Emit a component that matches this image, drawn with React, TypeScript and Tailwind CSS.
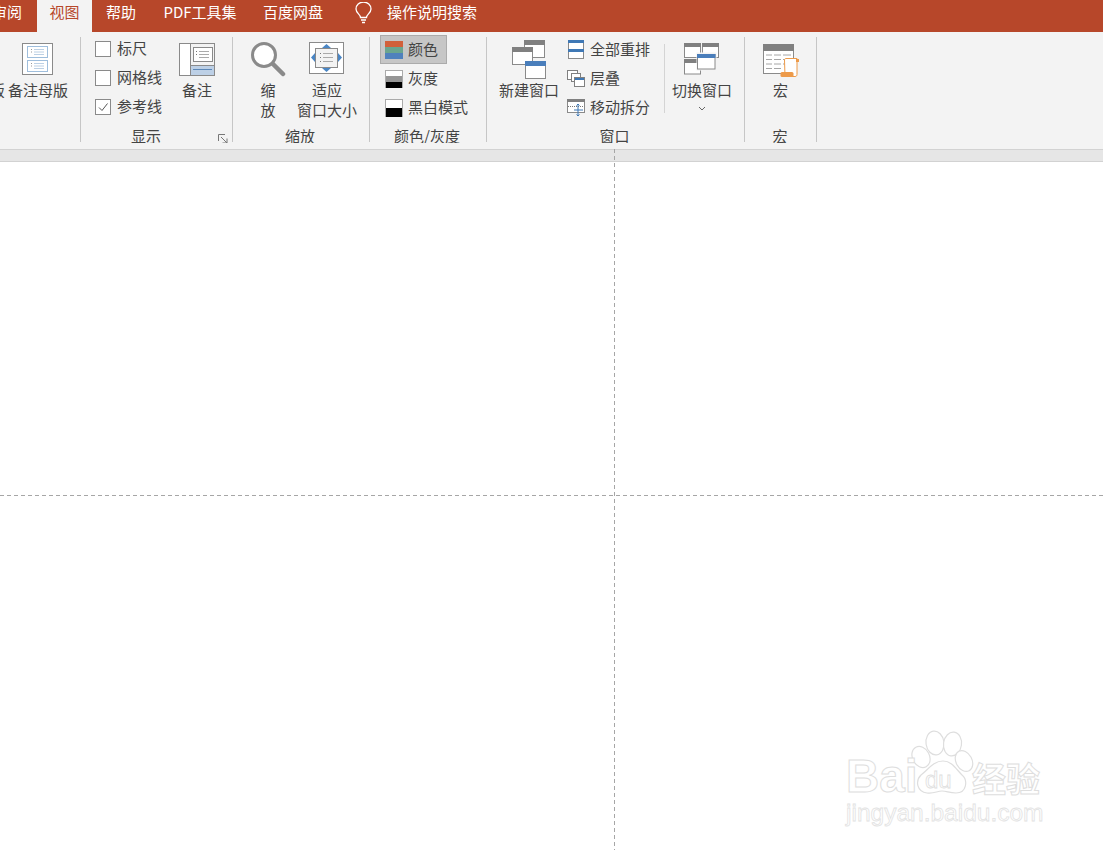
import React from "react";

const FONT = "font-['Noto_Sans_CJK_SC','Noto_Sans',sans-serif]";

function Tab({ children, active, className = "" }: { children: React.ReactNode; active?: boolean; className?: string }) {
  return (
    <div className={`h-[32px] shrink-0 leading-[23px] text-center ${active ? "bg-[#f3f3f3] text-[#b7472a]" : "text-white"} ${className}`}>
      {children}
    </div>
  );
}

function Group({ width, label, children, labelClass = "", extra }: { width: number; label: string; children: React.ReactNode; labelClass?: string; extra?: React.ReactNode }) {
  return (
    <div className="flex shrink-0 h-[117px]">
      <div className="relative flex flex-col h-[111px] overflow-hidden" style={{ width }}>
        <div className="flex h-[94px] shrink-0">{children}</div>
        <div className={`h-[20px] shrink-0 leading-[20px] text-center ${labelClass}`}>{label}</div>
        {extra}
      </div>
      <div className="w-px h-[105px] mt-[5px] bg-[#c6c6c6] shrink-0" />
    </div>
  );
}

function Large({ width, icon, iconTop, lines, className = "", chevron }: { width: number; icon: React.ReactNode; iconTop: number; lines: string[]; className?: string; chevron?: boolean }) {
  return (
    <div className={`flex flex-col items-center shrink-0 ${className}`} style={{ width }}>
      <div className="h-[48px] shrink-0 flex justify-center" style={{ paddingTop: iconTop }}>{icon}</div>
      {lines.map((l) => (
        <div key={l} className="h-[20px] leading-[20px] whitespace-nowrap">{l}</div>
      ))}
      {chevron && (
        <svg width="8" height="5" viewBox="0 0 8 5" className="mt-[6px]" fill="none" stroke="#666"><path d="M1 1l3 3 3-3" /></svg>
      )}
    </div>
  );
}

function CheckRow({ label, checked }: { label: string; checked?: boolean }) {
  return (
    <div className="h-[29px] flex items-center gap-[6px] whitespace-nowrap">
      <div className="w-[16px] h-[16px] border border-[#8a8a8a] bg-white flex items-center justify-center">
        {checked && (
          <svg width="12" height="12" viewBox="0 0 12 12" fill="none" stroke="#555"><path d="M2 6.5l3 3 5.5-7" /></svg>
        )}
      </div>
      {label}
    </div>
  );
}

function Swatch({ colors, outlined }: { colors: string[]; outlined?: boolean }) {
  return (
    <div className={`w-[18px] h-[18px] flex flex-col shrink-0 ${outlined ? "border-t border-x border-[#aaa]" : ""}`}>
      {colors.map((c, i) => (
        <div key={i} className="flex-1" style={{ background: c }} />
      ))}
    </div>
  );
}

const NotesMasterIcon = (
  <svg width="32" height="32" viewBox="0 0 32 32" fill="none">
    <rect x=".5" y=".5" width="30" height="31" fill="#fff" stroke="#8a8a8a" />
    <rect x="5.5" y="3.5" width="20" height="11" stroke="#3f7cb8" strokeDasharray="1 1" />
    <rect x="5.5" y="17.5" width="20" height="11" stroke="#3f7cb8" strokeDasharray="1 1" />
    <path d="M12 6.500h10M12 9h10M12 11.500h10M12 20.500h10M12 23h10M12 25.500h10" stroke="#bcd0e4" />
    <path d="M9 6.500h1M9 9h1M9 20.500h1M9 23h1" stroke="#999" />
  </svg>
);

const NotesIcon = (
  <svg width="36" height="33" viewBox="0 0 36 33" fill="none">
    <rect x=".5" y=".5" width="35" height="32" fill="#fff" stroke="#8a8a8a" />
    <rect x="11.5" y=".5" width="24" height="22" fill="#f3f3f3" stroke="#8a8a8a" />
    <rect x="14.5" y="4.5" width="19" height="14" fill="#fff" stroke="#8a8a8a" />
    <path d="M20 8.500h10M20 11.500h10M20 14.500h10" stroke="#aaa" />
    <path d="M17 8.500h1M17 11.500h1" stroke="#777" />
    <rect x="11.5" y="22.5" width="24" height="10" fill="#bdd0e6" stroke="#8a8a8a" />
    <path d="M14 26.500h19" stroke="#5c88b8" />
  </svg>
);

const ZoomIcon = (
  <svg width="36" height="36" viewBox="0 0 36 36" fill="none">
    <circle cx="14" cy="14" r="11.5" fill="#fff" stroke="#8a8a8a" strokeWidth="3" />
    <path d="M23 23l10 10" stroke="#8a8a8a" strokeWidth="4.500" strokeLinecap="round" />
  </svg>
);

const FitIcon = (
  <svg width="36" height="32" viewBox="0 0 36 32" fill="none">
    <rect x=".5" y=".5" width="34" height="31" fill="#fff" stroke="#8a8a8a" />
    <path d="M17.5 2l4.500 4h-9zM17.500 30l4.500-4h-9zM2 15.500l4-4.500v9zM33 15.500l-4-4.500v9z" fill="#4a86c5" />
    <rect x="6.5" y="6.5" width="22" height="19" fill="#f3f3f3" stroke="#8a8a8a" />
    <path d="M14 11.500h10M14 15.500h10M14 19.500h10" stroke="#aaa" />
    <path d="M11 11.500h1M11 15.500h1M11 19.500h1" stroke="#777" />
  </svg>
);

const NewWindowIcon = (
  <svg width="36" height="39" viewBox="0 0 36 39" fill="none" className="translate-x-[1px]">
    <rect x="12.5" y=".5" width="20" height="17" fill="#fff" stroke="#8a8a8a" />
    <rect x="12" y="0" width="21" height="5" fill="#808080" />
    <rect x=".5" y="7.5" width="20" height="17" fill="#fff" stroke="#8a8a8a" />
    <rect x="0" y="7" width="21" height="5" fill="#808080" />
    <rect x="13.5" y="21.5" width="20" height="17" fill="#fff" stroke="#8a8a8a" />
    <rect x="13" y="21" width="21" height="5" fill="#4a7ebb" />
  </svg>
);

const ArrangeIcon = (
  <svg width="17" height="19" viewBox="0 0 17 19" fill="none">
    <rect x=".5" y=".5" width="15" height="18" fill="#fff" stroke="#8a8a8a" />
    <rect x="0" y="0" width="16" height="3" fill="#3f78b5" />
    <rect x="0" y="9" width="16" height="3" fill="#3f78b5" />
  </svg>
);

const CascadeIcon = (
  <svg width="18" height="17" viewBox="0 0 18 17" fill="none" className="-translate-x-[1px]">
    <rect x=".5" y=".5" width="10" height="9" fill="#fff" stroke="#808080" />
    <rect x="4.5" y="3.5" width="9" height="8" fill="#fff" stroke="#808080" />
    <rect x="7.5" y="7.5" width="10" height="9" fill="#fff" stroke="#808080" />
    <rect x="8" y="8" width="9" height="2" fill="#3f78b5" />
  </svg>
);

const SplitIcon = (
  <svg width="18" height="18" viewBox="0 0 18 18" fill="none" className="-translate-x-[1px]">
    <rect x=".5" y=".5" width="17" height="13" fill="#fff" stroke="#8a8a8a" />
    <rect x="0" y="0" width="18" height="3" fill="#808080" />
    <path d="M1 7.500h16" stroke="#777" strokeDasharray="1 1" />
    <path d="M11 5v12M7 11h9" stroke="#3f78b5" />
    <path d="M9.500 6.500L11 5l1.500 1.500M9.500 15.500L11 17l1.500-1.500" stroke="#3f78b5" />
  </svg>
);

const SwitchIcon = (
  <svg width="36" height="32" viewBox="0 0 36 32" fill="none">
    <rect x=".5" y=".5" width="16" height="14" fill="#fff" stroke="#8a8a8a" />
    <rect x="0" y="0" width="17" height="4" fill="#808080" />
    <rect x="18.5" y=".5" width="16" height="14" fill="#fff" stroke="#8a8a8a" />
    <rect x="18" y="0" width="17" height="4" fill="#808080" />
    <rect x=".5" y="16.5" width="16" height="14.5" fill="#fff" stroke="#8a8a8a" />
    <rect x="0" y="16" width="17" height="4" fill="#808080" />
    <rect x="13" y="10" width="19" height="17" fill="#f3f3f3" stroke="#f3f3f3" />
    <rect x="13.5" y="11.5" width="17.5" height="14.5" fill="#fff" stroke="#8a8a8a" />
    <rect x="13" y="11" width="18.5" height="4" fill="#4a7ebb" />
  </svg>
);

const MacroIcon = (
  <svg width="37" height="34" viewBox="0 0 37 34" fill="none" className="translate-x-[1px]">
    <rect x=".5" y=".5" width="30" height="29" fill="#fff" stroke="#8a8a8a" />
    <rect x="0" y="0" width="31" height="7" fill="#808080" />
    <path d="M3 11h6M11 11h7M20 11h8M3 15.500h6M11 15.500h7M20 15.500h8M3 20h6M11 20h7M20 20h8M3 24.500h6M11 24.500h7" stroke="#a6a6a6" />
    <path d="M21.500 16c0-1 .7-1.500 1.500-1.500h11v16c0 1-.5 2-2 2h-10z" fill="#fff" stroke="#ed9a49" />
    <rect x="17.5" y="28" width="13" height="5" rx="1.5" fill="#ed9a49" />
    <rect x="33" y="15" width="3" height="3" fill="#ed9a49" />
  </svg>
);

function Watermark() {
  return (
    <div className="absolute left-[830px] top-[720px] w-[273px] h-[130px] pointer-events-none">
      <svg width="273" height="80" viewBox="0 0 273 80" fill="#fff" stroke="#dedede" strokeWidth="1.2" className="absolute left-0 top-0">
        <ellipse cx="105" cy="23" rx="9" ry="12" transform="rotate(-8 105 23)" />
        <ellipse cx="122.500" cy="24" rx="9" ry="12" transform="rotate(8 122.500 24)" />
        <ellipse cx="91" cy="37" rx="8.500" ry="11" transform="rotate(-28 91 37)" />
        <ellipse cx="134" cy="41" rx="8" ry="11" transform="rotate(-28 134 41)" />
        <path d="M113 41c9 0 13 8 19 14 6 5 5 18-6 18-7 0-9-2-14-2s-8 3-15 2c-10-1-12-12-6-18 7-5 12-14 22-14z" />
      </svg>
      <div className="absolute left-[16px] top-[32px] font-['Liberation_Sans',sans-serif] font-bold text-[46px] leading-[48px] text-white [-webkit-text-stroke:1px_#dedede]">Bai</div>
      <div className="absolute left-[95px] top-[47px] font-['Liberation_Sans',sans-serif] text-[24px] leading-[26px] text-white [-webkit-text-stroke:0.8px_#dedede]">du</div>
      <div className="absolute left-[142px] top-[38px] font-['Noto_Sans_CJK_SC',sans-serif] font-bold text-[34px] leading-[40px] text-white [-webkit-text-stroke:1px_#dedede] whitespace-nowrap">经验</div>
      <div className="absolute left-[16px] top-[77px] font-['Liberation_Sans',sans-serif] text-[24.5px] leading-[32px] text-white [-webkit-text-stroke:0.8px_#e2e2e2] whitespace-nowrap">jingyan.baidu.com</div>
    </div>
  );
}

export default function App() {
  return (
    <div className={`relative w-[1103px] h-[850px] overflow-hidden bg-white text-[15px] text-[#444] ${FONT}`}>
      <div className="flex h-[32px] bg-[#b7472a] text-[15px] overflow-hidden">
        <Tab className="w-[37px] text-left -ml-[8px] whitespace-nowrap">审阅</Tab>
        <Tab active className="w-[55px] ml-[8px]">视图</Tab>
        <Tab className="w-[30px] ml-[14px]">帮助</Tab>
        <Tab className="w-[74px] ml-[27px] whitespace-nowrap">PDF工具集</Tab>
        <Tab className="w-[60px] ml-[26px]">百度网盘</Tab>
        <div className="ml-[31px] w-[18px] h-[25px] flex items-center justify-center shrink-0">
          <svg width="17" height="22" viewBox="0 0 17 22" fill="none" stroke="#fff" strokeWidth="1.3">
            <path d="M5.500 15.500c0-3-4.500-4.500-4.500-8.500a7.500 7 0 0 1 15 0c0 4-4.500 5.500-4.500 8.500z" />
            <path d="M6 18h5M7 20.500h3" />
          </svg>
        </div>
        <Tab className="w-[90px] ml-[15px] whitespace-nowrap">操作说明搜索</Tab>
      </div>

      <div className="flex h-[117px] bg-[#f3f3f3]">
        <Group width={80} label="">
          <div className="w-full overflow-hidden flex justify-end pr-[12px]">
            <div className="flex flex-col items-end shrink-0">
              <div className="h-[48px] w-[60px] flex justify-center pt-[11px]">{NotesMasterIcon}</div>
              <div className="h-[20px] leading-[20px] whitespace-nowrap">版 备注母版</div>
            </div>
          </div>
        </Group>

        <Group width={151} label="显示" labelClass="-ml-[21px]" extra={
          <svg width="10" height="10" viewBox="0 0 10 10" fill="none" stroke="#777" className="absolute left-[137px] top-[102px]">
            <path d="M.5 7V.5H7M3 3l6 6M9 4.500V9H4.500" />
          </svg>
        }>
          <div className="flex flex-col pl-[14px] pt-[2px] w-[98px] shrink-0">
            <CheckRow label="标尺" />
            <CheckRow label="网格线" />
            <CheckRow label="参考线" checked />
          </div>
          <Large width={36} iconTop={11} icon={NotesIcon} lines={["备注"]} />
        </Group>

        <Group width={136} label="缩放" labelClass="-ml-[2px]">
          <Large width={36} iconTop={9} icon={ZoomIcon} lines={["缩", "放"]} className="ml-[17px]" />
          <Large width={60} iconTop={10} icon={FitIcon} lines={["适应", "窗口大小"]} className="ml-[11px]" />
        </Group>

        <Group width={116} label="颜色/灰度" labelClass="-ml-[2px]">
          <div className="flex flex-col pl-[10px] pt-[3px] w-full">
            <div className="h-[29px] w-[67px] flex items-center gap-[5px] pl-[4px] bg-[#c6c6c6] border border-[#ababab]">
              <Swatch colors={["#d2603a", "#6aa58f", "#4f81bd"]} />
              颜色
            </div>
            <div className="h-[29px] flex items-center gap-[5px] pl-[5px]">
              <Swatch outlined colors={["#ffffff", "#969696", "#000000"]} />
              灰度
            </div>
            <div className="h-[29px] flex items-center gap-[5px] pl-[5px] whitespace-nowrap">
              <Swatch outlined colors={["#ffffff", "#000000"]} />
              黑白模式
            </div>
          </div>
        </Group>

        <Group width={257} label="窗口" labelClass="-ml-[2px]">
          <Large width={60} iconTop={8} icon={NewWindowIcon} lines={["新建窗口"]} className="ml-[12px]" />
          <div className="flex flex-col pl-[9px] pt-[3px] w-[92px] shrink-0">
            <div className="h-[29px] flex items-center whitespace-nowrap"><div className="w-[22px] shrink-0 flex">{ArrangeIcon}</div>全部重排</div>
            <div className="h-[29px] flex items-center whitespace-nowrap"><div className="w-[22px] shrink-0 flex">{CascadeIcon}</div>层叠</div>
            <div className="h-[29px] flex items-center whitespace-nowrap"><div className="w-[22px] shrink-0 flex">{SplitIcon}</div>移动拆分</div>
          </div>
          <div className="w-px h-[69px] mt-[12px] bg-[#d4d4d4] shrink-0 ml-[13px]" />
          <Large width={60} iconTop={11} icon={SwitchIcon} lines={["切换窗口"]} chevron className="ml-[7px]" />
        </Group>

        <Group width={71} label="宏" labelClass="-ml-[1px]">
          <Large width={71} iconTop={12} icon={MacroIcon} lines={["宏"]} />
        </Group>
      </div>

      <div className="h-[13px] bg-[#e6e6e6] border-t border-b border-[#d2d2d2]" />

      <div className="h-[688px] bg-white" />

      <div className="absolute left-[614px] top-[149px] bottom-0 w-px bg-[repeating-linear-gradient(to_bottom,#a6a6a6_0_4px,transparent_4px_7px)]" />
      <div className="absolute left-0 right-0 top-[495px] h-px bg-[repeating-linear-gradient(to_right,#a6a6a6_0_4px,transparent_4px_7px)]" />

      <Watermark />
    </div>
  );
}
